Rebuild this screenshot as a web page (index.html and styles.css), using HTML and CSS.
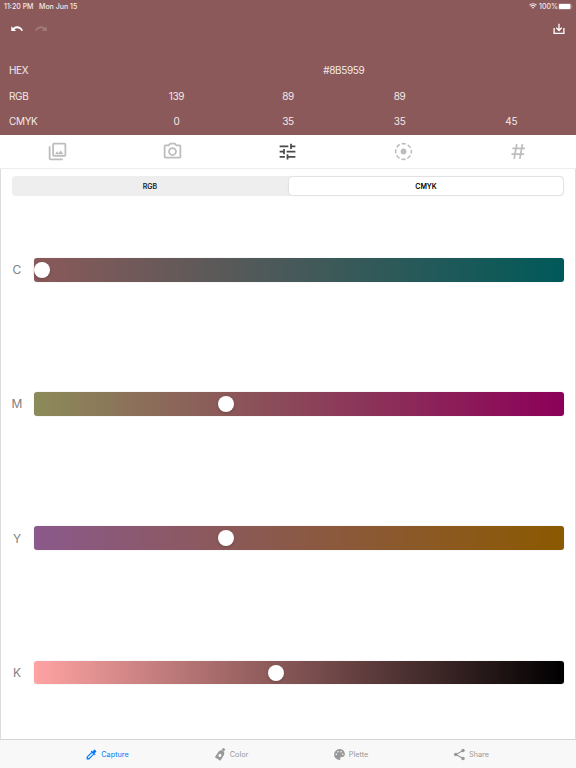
FILE: index.html
```html
<!DOCTYPE html>
<html lang="en">
<head>
<meta charset="utf-8">
<title>Color capture</title>
<link rel="stylesheet" href="styles.css">
</head>
<body>
<header class="header">
  <div class="status">
    <span class="time">11:20 PM</span><span class="date">Mon Jun 15</span>
    <svg class="wifi" viewBox="0 0 16 12"><path d="M1 4.3a10 10 0 0 1 14 0M3.5 7a6.3 6.3 0 0 1 9 0" fill="none" stroke="currentColor" stroke-width="2.200"/><path d="M5.6 9a3.5 3.5 0 0 1 4.8 0L8 11.5z" fill="currentColor"/></svg>
    <span class="percent">100%</span>
    <svg class="battery" viewBox="0 0 15 7"><rect x=".3" y=".3" width="12.9" height="6.4" rx="1.7" fill="none" stroke="currentColor" stroke-opacity=".5" stroke-width=".5"/><rect x="1" y="1" width="11.5" height="5" rx="1" fill="#fff"/><path d="M13.8 2.4q1.2 1.1 0 2.2z" fill="currentColor" opacity=".6"/></svg>
  </div>
  <div class="actions">
    <svg class="undo" viewBox="0 0 12 6"><path d="M.3.2v4.800h4.800L3.400 3.300C5.600 1.700 8.800 1.800 10.500 5L12 4.500C9.700-.3 5-.6 2 1.900z" fill="currentColor"/></svg>
    <svg class="redo" viewBox="0 0 12 6"><path d="M11.700.2v4.800H6.900L8.600 3.300C6.400 1.700 3.200 1.800 1.500 5L0 4.500C2.300-.3 7-.6 10 1.900z" fill="currentColor"/></svg>
    <svg class="save" viewBox="0 0 12 12"><path d="M1.100 5v5.300h9.800V5M6 .7v6.500M3.300 4.800 6 7.500l2.700-2.700" fill="none" stroke="currentColor" stroke-width="1.300"/></svg>
  </div>
  <div class="values">
    <span class="name">HEX</span><span class="hex">#8B5959</span>
    <span class="name">RGB</span><span>139</span><span>89</span><span>89</span><span></span>
    <span class="name">CMYK</span><span>0</span><span>35</span><span>35</span><span>45</span>
  </div>
</header>
<nav class="modes">
  <span><svg viewBox="0 0 24 24"><path d="M20 4v12H8V4h12m0-2H8c-1.100 0-2 .9-2 2v12c0 1.100.9 2 2 2h12c1.100 0 2-.9 2-2V4c0-1.100-.9-2-2-2zm-8.500 9.670 1.690 2.260 2.480-3.100L19 15H9zM2 6v14c0 1.100.9 2 2 2h14v-2H4V6H2z"/></svg></span>
  <span><svg viewBox="0 0 24 24"><path d="M20 4h-3.170L15 2H9L7.170 4H4c-1.100 0-2 .9-2 2v12c0 1.100.9 2 2 2h16c1.100 0 2-.9 2-2V6c0-1.100-.9-2-2-2zm0 14H4V6h4.050l1.830-2h4.240l1.830 2H20v12zM12 7c-2.760 0-5 2.240-5 5s2.240 5 5 5 5-2.240 5-5-2.240-5-5-5zm0 8c-1.650 0-3-1.350-3-3s1.350-3 3-3 3 1.350 3 3-1.350 3-3 3z"/></svg></span>
  <span class="active"><svg class="tune" viewBox="0 0 24 24"><path d="M3 17v2h6v-2H3zM3 5v2h10V5H3zm10 16v-2h8v-2h-8v-2h-2v6h2zM7 9v2H3v2h4v2h2V9H7zm14 4v-2H11v2h10zm-6-4h2V7h4V5h-4V3h-2v6z"/></svg></span>
  <span><svg viewBox="0 0 24 24"><circle cx="12" cy="12" r="3.300"/><circle class="ring" cx="12" cy="12" r="9"/></svg></span>
  <span><svg viewBox="0 0 24 24"><path d="M5 8.500h14.500M4 15h14.500M10 3.500 7 20.500M16.500 3.500l-3 17" fill="none" stroke="currentColor" stroke-width="2"/></svg></span>
</nav>
<main class="panel">
  <div class="segments"><span>RGB</span><span class="selected">CMYK</span></div>
  <div class="sliders">
    <div class="slider"><label>C</label><div class="track cyan"><i class="knob" style="left:7.500px"></i></div></div>
    <div class="slider"><label>M</label><div class="track magenta"><i class="knob" style="left:192.400px"></i></div></div>
    <div class="slider"><label>Y</label><div class="track yellow"><i class="knob" style="left:192.400px"></i></div></div>
    <div class="slider"><label>K</label><div class="track black"><i class="knob" style="left:242px"></i></div></div>
  </div>
</main>
<footer class="tabbar">
  <span class="current"><svg viewBox="0 0 24 24"><path d="m20.710 5.630-2.340-2.340c-.39-.39-1.020-.39-1.410 0l-3.120 3.120-1.930-1.910-1.410 1.410 1.420 1.420L3 16.250V21h4.750l8.920-8.920 1.420 1.420 1.410-1.410-1.920-1.920 3.120-3.120c.4-.4.4-1.030.01-1.420zM6.920 19 5 17.080l8.060-8.060 1.920 1.920z"/></svg>Capture</span>
  <span><svg viewBox="0 0 24 24"><g transform="rotate(32 12 12)"><path fill-rule="evenodd" d="M9.500-1h5v5h-5zM8.500 4.500h7L18 9v13H6V9zM12 11a2.500 3 0 1 0 0 6 2.500 3 0 0 0 0-6z"/></g></svg>Color</span>
  <span><svg viewBox="0 0 24 24"><path fill-rule="evenodd" d="M12 2a10 10 0 0 0 0 20c1.400 0 2.200-1.400 1.500-2.600-.7-1.300.1-2.700 1.600-2.700H17c2.800 0 5-2.200 5-5C22 6 17.500 2 12 2zM6.200 10a1.500 1.500 0 1 0 0 3 1.500 1.500 0 0 0 0-3zm3-4.500a1.500 1.500 0 1 0 0 3 1.500 1.500 0 0 0 0-3zm5.600 0a1.500 1.500 0 1 0 0 3 1.500 1.500 0 0 0 0-3zm3 4.500a1.500 1.500 0 1 0 0 3 1.500 1.500 0 0 0 0-3z"/></svg>Plette</span>
  <span><svg viewBox="0 0 24 24"><path d="m18 5-13 7 13 7" fill="none" stroke="currentColor" stroke-width="2"/><circle cx="18.500" cy="4.800" r="3.200"/><circle cx="5" cy="12" r="3.200"/><circle cx="18.500" cy="19.200" r="3.200"/></svg>Share</span>
</footer>
</body>
</html>
```
FILE: styles.css
```css
* { box-sizing: border-box; }
body {
  margin: 0;
  width: 576px;
  height: 768px;
  display: flex;
  flex-direction: column;
  overflow: hidden;
  background: #fff;
  font-family: Inter, "Liberation Sans", sans-serif;
}
svg { display: block; flex: none; fill: currentColor; }

.header { flex: none; height: 135px; background: #8b5959; color: #f3eaea; }
.status {
  display: flex;
  align-items: center;
  height: 12px;
  padding: 0 3px 0 4px;
  font-size: 7px;
  font-weight: 500;
}
.time { width: 35px; white-space: nowrap; }
.wifi { width: 8px; height: 6px; margin-left: auto; }
.percent { width: 18px; margin: 0 1px 0 2px; }
.battery { width: 15px; height: 7px; }
.actions {
  display: flex;
  align-items: center;
  height: 34px;
  padding: 0 11px;
  color: #fff;
}
.undo, .redo { width: 12px; height: 6px; }
.redo { margin-left: 12px; opacity: .2; }
.save { width: 12px; height: 12px; margin-left: auto; }
.values {
  display: grid;
  grid-template-columns: repeat(5, 1fr);
  grid-auto-rows: 25.400px;
  align-items: center;
  margin-top: 11.500px;
  padding: 0 9px;
  font-size: 10px;
  letter-spacing: -.35px;
  text-align: center;
}
.name { text-align: left; }
.hex { grid-column: span 4; }

.modes {
  flex: none;
  display: grid;
  grid-template-columns: repeat(5, 1fr);
  align-items: center;
  height: 34px;
  border-bottom: 1px solid #eee;
  color: #bdbdbd;
}
.modes span { display: flex; justify-content: center; }
.modes svg { width: 21px; height: 21px; }
.modes .active { color: #4a4a4a; }
.ring { fill: none; stroke: currentColor; stroke-width: 1.800; stroke-dasharray: 4.700 2.370; stroke-dashoffset: 2.350; }

.panel {
  flex: 1;
  min-height: 0;
  display: flex;
  flex-direction: column;
  padding: 7px 11px 0;
  border: solid #dcdcdc;
  border-width: 0 1px;
}
.segments {
  flex: none;
  display: grid;
  grid-template-columns: 1fr 1fr;
  height: 20px;
  border-radius: 4px;
  background: #eee;
  font-size: 7px;
  font-weight: 600;
  color: #222;
}
.segments span { display: flex; align-items: center; justify-content: center; }
.segments .selected {
  margin: 1px;
  border-radius: 4px;
  background: #fff;
  box-shadow: 0 0 1px 1px #e0e0e0;
  color: #000;
}
.sliders {
  flex: none;
  display: grid;
  grid-template-rows: repeat(4, 134.200px);
  margin-top: 6.700px;
}
.slider { display: grid; grid-template-columns: 22px 1fr; align-items: center; }
.slider label { width: 10px; display: flex; justify-content: center; font-size: 12px; color: #808080; }
.track { position: relative; height: 23.600px; border-radius: 3px; box-shadow: 0 0 1px rgba(0, 0, 0, .3); }
.knob {
  position: absolute;
  top: 4px;
  width: 16px;
  height: 16px;
  margin-left: -8px;
  border-radius: 50%;
  background: #fff;
  box-shadow: 0 1px 3px rgba(0, 0, 0, .2);
}
.cyan { background: linear-gradient(90deg, #8b5959, #005959); }
.magenta { background: linear-gradient(90deg, #8b8b59, #8b0059); }
.yellow { background: linear-gradient(90deg, #8b598b, #8b5900); }
.black { background: linear-gradient(90deg, #ffa3a3, #000); }

.tabbar {
  flex: none;
  display: grid;
  grid-template-columns: 122px 126px 113px 128px;
  height: 29px;
  padding: 0 0 0 46px;
  border-top: 1px solid #d5d5d5;
  background: #f8f8f8;
  color: #999;
  font-size: 7.300px;
}
.tabbar span { display: flex; align-items: center; justify-content: center; gap: 3px; }
.tabbar svg { width: 13px; height: 13px; }
.tabbar .current { color: #007aff; }
```
